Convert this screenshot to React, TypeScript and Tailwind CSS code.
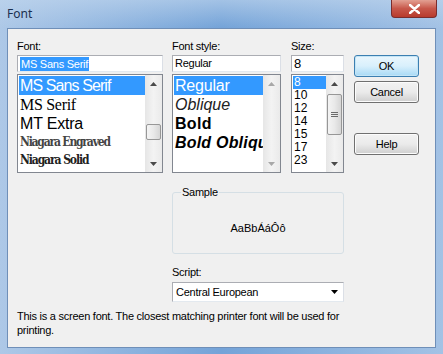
import React from 'react';

const sans = "font-['Liberation_Sans',Arial,sans-serif]";

function Arrow({ dir, disabled }: { dir: 'up' | 'down'; disabled?: boolean }) {
  return (
    <svg width="7" height="4" viewBox="0 0 7 4">
      <path
        d={dir === 'up' ? 'M0 4 L3.5 0 L7 4 Z' : 'M0 0 L7 0 L3.5 4 Z'}
        fill={disabled ? '#a8a8a8' : '#4a4a4a'}
      />
    </svg>
  );
}

function ScrollBar({ thumbTop, thumbH, grip, disabled }: { thumbTop?: number; thumbH?: number; grip?: boolean; disabled?: boolean }) {
  return (
    <div className="w-[17px] h-full flex flex-col bg-gradient-to-r from-[#e6e6e6] via-[#f3f3f3] to-[#eaeaea]">
      <div className="h-[17px] flex items-center justify-center">
        <Arrow dir="up" disabled={disabled} />
      </div>
      <div className="flex-1 flex flex-col px-[1px]">
        {thumbH ? (
          <div
            className="w-full rounded-[2px] border border-[#979797] bg-gradient-to-r from-[#f4f4f4] via-[#e9e9e9] to-[#d6d6d6] flex flex-col items-center justify-center gap-[1px]"
            style={{ marginTop: thumbTop, height: thumbH }}
          >
            {grip && (
              <>
                <div className="w-[7px] h-[1px] bg-[#6b6b6b]" />
                <div className="w-[7px] h-[1px] bg-[#6b6b6b]" />
                <div className="w-[7px] h-[1px] bg-[#6b6b6b]" />
              </>
            )}
          </div>
        ) : null}
      </div>
      <div className="h-[17px] flex items-center justify-center">
        <Arrow dir="down" disabled={disabled} />
      </div>
    </div>
  );
}

function Field({ children }: { children: React.ReactNode }) {
  return (
    <div className="h-[17px] bg-white border border-[#abadb3] border-b-[#e3e9ef] border-r-[#dbdfe6] flex items-center pl-[2px] text-[11px] text-black">
      {children}
    </div>
  );
}

export default function App() {
  return (
    <div className={`w-[443px] h-[354px] flex flex-col bg-gradient-to-r from-[#adc8e7] via-[#74a3d8] to-[#a3c2e5] ${sans}`}>
      {/* Title bar */}
      <div className="h-[28px] flex justify-between items-start bg-gradient-to-b from-[#c2d7ee]/60 to-transparent">
        <div className="pl-[7px] pt-[5px] text-[12px] text-[#1a2f4f] font-['Noto_Sans',sans-serif]">Font</div>
        <div className="mr-[6px] w-[46px] h-[18px] rounded-b-[4px] border border-t-0 border-[#7a2d2d] bg-gradient-to-b from-[#e2a093] via-[#c7574a] to-[#b83a2c] flex items-center justify-center">
          <svg width="11" height="10" viewBox="0 0 11 10">
            <path d="M1 1 L10 9 M10 1 L1 9" stroke="#ffffff" strokeWidth="2.4" strokeLinecap="round" />
          </svg>
        </div>
      </div>

      {/* Client area */}
      <div className="mx-[7px] h-[320px] bg-[#f0f0f0] border border-[#6f8fb8] pl-[9px] pt-[11px] text-[11px] tracking-[-0.25px] text-black">
        <div className="flex">
          {/* Font */}
          <div className="w-[146px] flex flex-col">
            <div className="h-[13px] leading-[13px]">Font:</div>
            <div className="mt-[2px]">
              <Field>
                <span className="bg-[#3399ff] text-white px-[1px] leading-[14px]">MS Sans Serif</span>
              </Field>
            </div>
            <div className="mt-[2px] h-[99px] bg-white border border-[#828790] flex">
              <div className="flex-1 overflow-hidden pt-[1px] pl-[1px] whitespace-nowrap">
                <div className="h-[19px] bg-[#3399ff] text-white text-[16px] leading-[19px] tracking-[-0.9px] pl-[1px]">MS Sans Serif</div>
                <div className="h-[19px] text-[16px] leading-[19px] tracking-[-0.3px] pl-[1px] font-['Liberation_Serif',serif]">MS Serif</div>
                <div className="h-[19px] text-[16px] leading-[19px] tracking-[-0.2px] pl-[1px]">MT Extra</div>
                <div className="h-[19px] text-[12px] leading-[19px] tracking-[-1.2px] pl-[1px] font-semibold text-[#444] font-['DejaVu_Serif_Condensed','DejaVu_Serif',serif]">Niagara Engraved</div>
                <div className="h-[19px] text-[12px] leading-[17px] tracking-[-1.1px] pl-[1px] font-semibold text-[#222] font-['DejaVu_Serif_Condensed','DejaVu_Serif',serif]">Niagara Solid</div>
              </div>
              <ScrollBar thumbTop={32} thumbH={16} />
            </div>
          </div>

          {/* Font style */}
          <div className="ml-[9px] w-[109px] flex flex-col">
            <div className="h-[13px] leading-[13px]">Font style:</div>
            <div className="mt-[2px]">
              <Field>Regular</Field>
            </div>
            <div className="mt-[2px] h-[99px] bg-white border border-[#828790] flex">
              <div className="flex-1 overflow-hidden pt-[1px] pl-[1px] whitespace-nowrap text-[16px] leading-[19px]">
                <div className="h-[19px] bg-[#3399ff] text-white tracking-[-0.2px] pl-[1px]">Regular</div>
                <div className="h-[19px] italic font-light tracking-[0px] pl-[1px] text-[#222]">Oblique</div>
                <div className="h-[19px] font-bold tracking-[0.3px] pl-[1px]">Bold</div>
                <div className="h-[19px] font-bold italic tracking-[0.2px] pl-[1px]">Bold Oblique</div>
              </div>
              <ScrollBar disabled />
            </div>
          </div>

          {/* Size */}
          <div className="ml-[10px] w-[53px] flex flex-col">
            <div className="h-[13px] leading-[13px]">Size:</div>
            <div className="mt-[2px]">
              <Field>
                <span className="text-[13px]">8</span>
              </Field>
            </div>
            <div className="mt-[2px] h-[99px] bg-white border border-[#828790] flex">
              <div className="flex-1 overflow-hidden pt-[1px] pl-[1px] whitespace-nowrap text-[12px] leading-[13px] tracking-[0px]">
                <div className="h-[13px] bg-[#3399ff] text-white pl-[1px]">8</div>
                {['10', '12', '14', '15', '17', '23'].map((s) => (
                  <div key={s} className="h-[13px] pl-[1px]">{s}</div>
                ))}
              </div>
              <ScrollBar thumbTop={2} thumbH={41} grip />
            </div>
          </div>

          {/* Buttons */}
          <div className="ml-[10px] w-[65px] flex flex-col pt-[15px]">
            <div className="h-[22px] rounded-[3px] border border-[#3c7fb1] bg-gradient-to-b from-[#eaf6fd] via-[#d9f0fc] to-[#a7d9f5] shadow-[inset_0_0_0_1px_#c4e5f6] flex items-center justify-center">OK</div>
            <div className="mt-[4px] h-[22px] rounded-[3px] border border-[#707070] bg-gradient-to-b from-[#f2f2f2] via-[#ebebeb] to-[#cfcfcf] shadow-[inset_0_0_0_1px_#fcfcfc] flex items-center justify-center">Cancel</div>
            <div className="mt-[30px] h-[22px] rounded-[3px] border border-[#707070] bg-gradient-to-b from-[#f2f2f2] via-[#ebebeb] to-[#cfcfcf] shadow-[inset_0_0_0_1px_#fcfcfc] flex items-center justify-center">Help</div>
          </div>
        </div>

        {/* Sample + Script */}
        <div className="ml-[155px] w-[172px] flex flex-col">
          <fieldset className="mt-[13px] h-[68px] border border-[#d5dfe5] rounded-[3px] px-[8px]">
            <legend className="px-[1px] h-[13px] leading-[13px]">Sample</legend>
            <div className="h-[58px] flex items-center justify-center tracking-[0px]">AaBbÁáÔô</div>
          </fieldset>
          <div className="mt-[12px] h-[13px] leading-[13px]">Script:</div>
          <div className="mt-[3px] h-[20px] bg-white border border-[#abadb3] border-b-[#e3e9ef] border-r-[#dbdfe6] flex items-center justify-between pl-[3px] pr-[5px]">
            <span>Central European</span>
            <svg width="7" height="4" viewBox="0 0 7 4">
              <path d="M0 0 L7 0 L3.5 4 Z" fill="#000" />
            </svg>
          </div>
        </div>

        <div className="mt-[7px] leading-[14px] w-[345px]">
          This is a screen font. The closest matching printer font will be used for printing.
        </div>
      </div>
    </div>
  );
}
